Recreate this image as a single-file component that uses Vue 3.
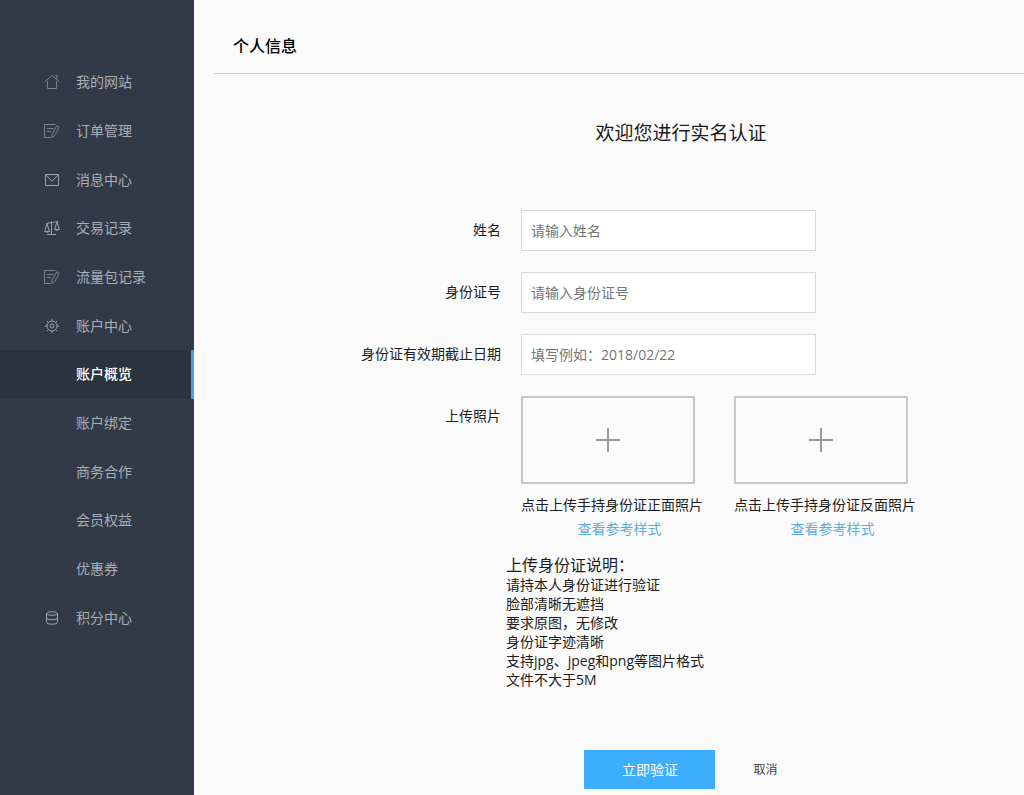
<script setup>
import { ref } from 'vue'

const menu = [
  { text: '我的网站', icon: 'home' },
  { text: '订单管理', icon: 'note' },
  { text: '消息中心', icon: 'mail' },
  { text: '交易记录', icon: 'scale' },
  { text: '流量包记录', icon: 'note' },
  { text: '账户中心', icon: 'gear' },
  { text: '账户概览', active: true },
  { text: '账户绑定' },
  { text: '商务合作' },
  { text: '会员权益' },
  { text: '优惠券' },
  { text: '积分中心', icon: 'coins' }
]

const fields = [
  { id: 'name', label: '姓名', hint: '请输入姓名', value: ref('') },
  { id: 'idno', label: '身份证号', hint: '请输入身份证号', value: ref('') },
  { id: 'expiry', label: '身份证有效期截止日期', hint: '填写例如：2018/02/22', value: ref('') }
]

const uploads = ['点击上传手持身份证正面照片', '点击上传手持身份证反面照片']

const notes = [
  '请持本人身份证进行验证',
  '脸部清晰无遮挡',
  '要求原图，无修改',
  '身份证字迹清晰',
  '支持jpg、jpeg和png等图片格式',
  '文件不大于5M'
]
</script>

<template>
  <div class="page">
    <nav class="sidebar">
      <ul class="menu">
        <li v-for="item in menu" :key="item.text">
          <a href="#" class="item" :class="{ active: item.active }">
            <svg class="icon" viewBox="0 0 16 16" aria-hidden="true">
              <g v-if="item.icon === 'home'" class="dim">
                <path d="M.5 8 8 1.500 15.500 8M3.500 7v7.500h9V7M11.500 1.500h1.500v3.500" />
              </g>
              <g v-else-if="item.icon === 'note'" class="dim">
                <path d="M11.500 1.500H.5v13h6.500M3 5.500h6.500M3 8.500h4" />
                <path d="M12.800 2.800l2.400 1.300-4.500 8.500-2.700 1.800V11.300z" />
              </g>
              <g v-else-if="item.icon === 'mail'">
                <path d="M1.500 2.500h13v11h-13zM1.800 3l6.200 6.200L14.200 3" />
              </g>
              <g v-else-if="item.icon === 'scale'">
                <path d="M7.500 1.500v13M3 14.500h9M2 3.500l12-2" />
                <path d="M3 3.500.8 11.500h4.600zM13 1.800l-2.300 7.700h4.600z" />
                <path d="M.8 11.500q2.300 1.500 4.600 0M10.700 9.500q2.300 1.500 4.600 0" />
              </g>
              <g v-else-if="item.icon === 'gear'">
                <circle cx="8" cy="8" r="5" />
                <circle cx="8" cy="8" r="2" />
                <path d="M8 .8V3M8 13v2.200M.8 8H3M13 8h2.200M2.900 2.900l1.600 1.600M11.500 11.500l1.600 1.600M2.900 13.100l1.600-1.600M11.500 4.500l1.600-1.600" />
              </g>
              <g v-else-if="item.icon === 'coins'">
                <ellipse cx="8" cy="3.500" rx="5.500" ry="1.800" />
                <path d="M2.500 3.500v9c0 2.200 11 2.200 11 0v-9M2.500 8c0 2.200 11 2.200 11 0" />
              </g>
            </svg>
            <span>{{ item.text }}</span>
          </a>
        </li>
      </ul>
    </nav>

    <main class="main">
      <h1 class="heading">个人信息</h1>
      <h2 class="title">欢迎您进行实名认证</h2>

      <form @submit.prevent>
        <div class="fields">
          <div v-for="f in fields" :key="f.id" class="row">
            <label :for="f.id">{{ f.label }}</label>
            <input :id="f.id" v-model="f.value.value" type="text" :placeholder="f.hint" />
          </div>
          <div class="row">
            <span id="photos" class="label">上传照片</span>
            <div class="uploads" role="group" aria-labelledby="photos">
              <div v-for="u in uploads" :key="u" class="upload">
                <button type="button" class="drop" :aria-label="u">
                  <svg viewBox="0 0 24 24" aria-hidden="true"><path d="M12 0v24M0 12h24" /></svg>
                </button>
                <p class="caption">{{ u }}</p>
                <a href="#" class="sample">查看参考样式</a>
              </div>
            </div>
          </div>
          <section class="notes">
            <h3>上传身份证说明：</h3>
            <p v-for="n in notes" :key="n">{{ n }}</p>
          </section>
        </div>

        <div class="actions">
          <button type="submit" class="submit">立即验证</button>
          <button type="button" class="cancel">取消</button>
        </div>
      </form>
    </main>
  </div>
</template>

<style>
body {
  margin: 0;
  background: #fafafa;
}
</style>

<style scoped>
.page {
  display: flex;
  min-height: 100vh;
  overflow-x: clip;
  background: #fafafa;
  color: #1c1c1c;
  font-family: "Open Sans", "Noto Sans CJK SC", sans-serif;
  font-size: 14px;
  line-height: 20px;
}

h1, h2, h3, p, ul {
  margin: 0;
  padding: 0;
  font-weight: 400;
}

button, input {
  box-sizing: border-box;
  margin: 0;
  padding: 0;
  border: 0;
  border-radius: 0;
  font: inherit;
}

button {
  cursor: pointer;
}

a {
  text-decoration: none;
}

.sidebar {
  flex: 0 0 194px;
  padding-top: 58px;
  box-sizing: border-box;
  background: #323a47;
}

.menu {
  display: grid;
  grid-auto-rows: 1fr;
  min-height: 584px;
  list-style: none;
}

.item {
  display: flex;
  align-items: center;
  gap: 16px;
  height: 100%;
  box-sizing: border-box;
  padding-left: 44px;
  border-right: 3px solid transparent;
  color: #a9aeb7;
}

.item.active {
  border-right-color: #46a3e2;
  background: #2b333f;
  color: #fff;
  font-weight: 500;
}

.icon {
  flex: none;
  width: 16px;
  height: 16px;
  fill: none;
  stroke: #9ca2ac;
  stroke-width: 1;
}

.dim {
  stroke: #7b828e;
}

.main {
  flex: 1 0 974px;
}

.heading {
  margin-left: 20px;
  padding: 34px 19px 15px;
  border-bottom: 1px solid #cfcfcf;
  font-size: 16px;
  font-weight: 500;
  line-height: 24px;
  color: #000;
}

.title {
  padding: 44px 0 62px;
  font-size: 19px;
  line-height: 30px;
  text-align: center;
}

.fields {
  display: grid;
  gap: 21px;
  width: 640px;
  margin: 0 auto;
}

.row {
  display: grid;
  grid-template-columns: 140px 1fr;
  column-gap: 20px;
}

label, .label {
  padding-top: 10px;
  text-align: right;
  white-space: nowrap;
}

input {
  width: 295px;
  height: 41px;
  padding: 0 9px;
  border: 1px solid #d9d9d9;
  background: #fff;
}

input::placeholder {
  color: #757575;
  opacity: 1;
}

.uploads {
  display: flex;
  gap: 16px;
}

.upload {
  width: 197px;
  text-align: center;
}

.drop {
  display: flex;
  align-items: center;
  justify-content: center;
  width: 174px;
  height: 88px;
  border: 2px solid #c8c8c8;
  background: transparent;
}

.drop svg {
  width: 24px;
  height: 24px;
  stroke: #999;
  stroke-width: 2;
}

.caption {
  padding-top: 11px;
  text-align: left;
  white-space: nowrap;
}

.sample {
  display: block;
  padding-top: 4px;
  color: #5aade0;
}

.notes {
  margin: -5px 0 0 145px;
  line-height: 19px;
}

.notes h3 {
  font-size: 16px;
  line-height: 20px;
}

.actions {
  display: flex;
  justify-content: center;
  gap: 38px;
  padding: 61px 0 6px;
}

.submit {
  width: 131px;
  height: 39px;
  background: #3dadfd;
  color: #fff;
}

.cancel {
  background: transparent;
  color: #444;
  font-size: 12px;
}
</style>
